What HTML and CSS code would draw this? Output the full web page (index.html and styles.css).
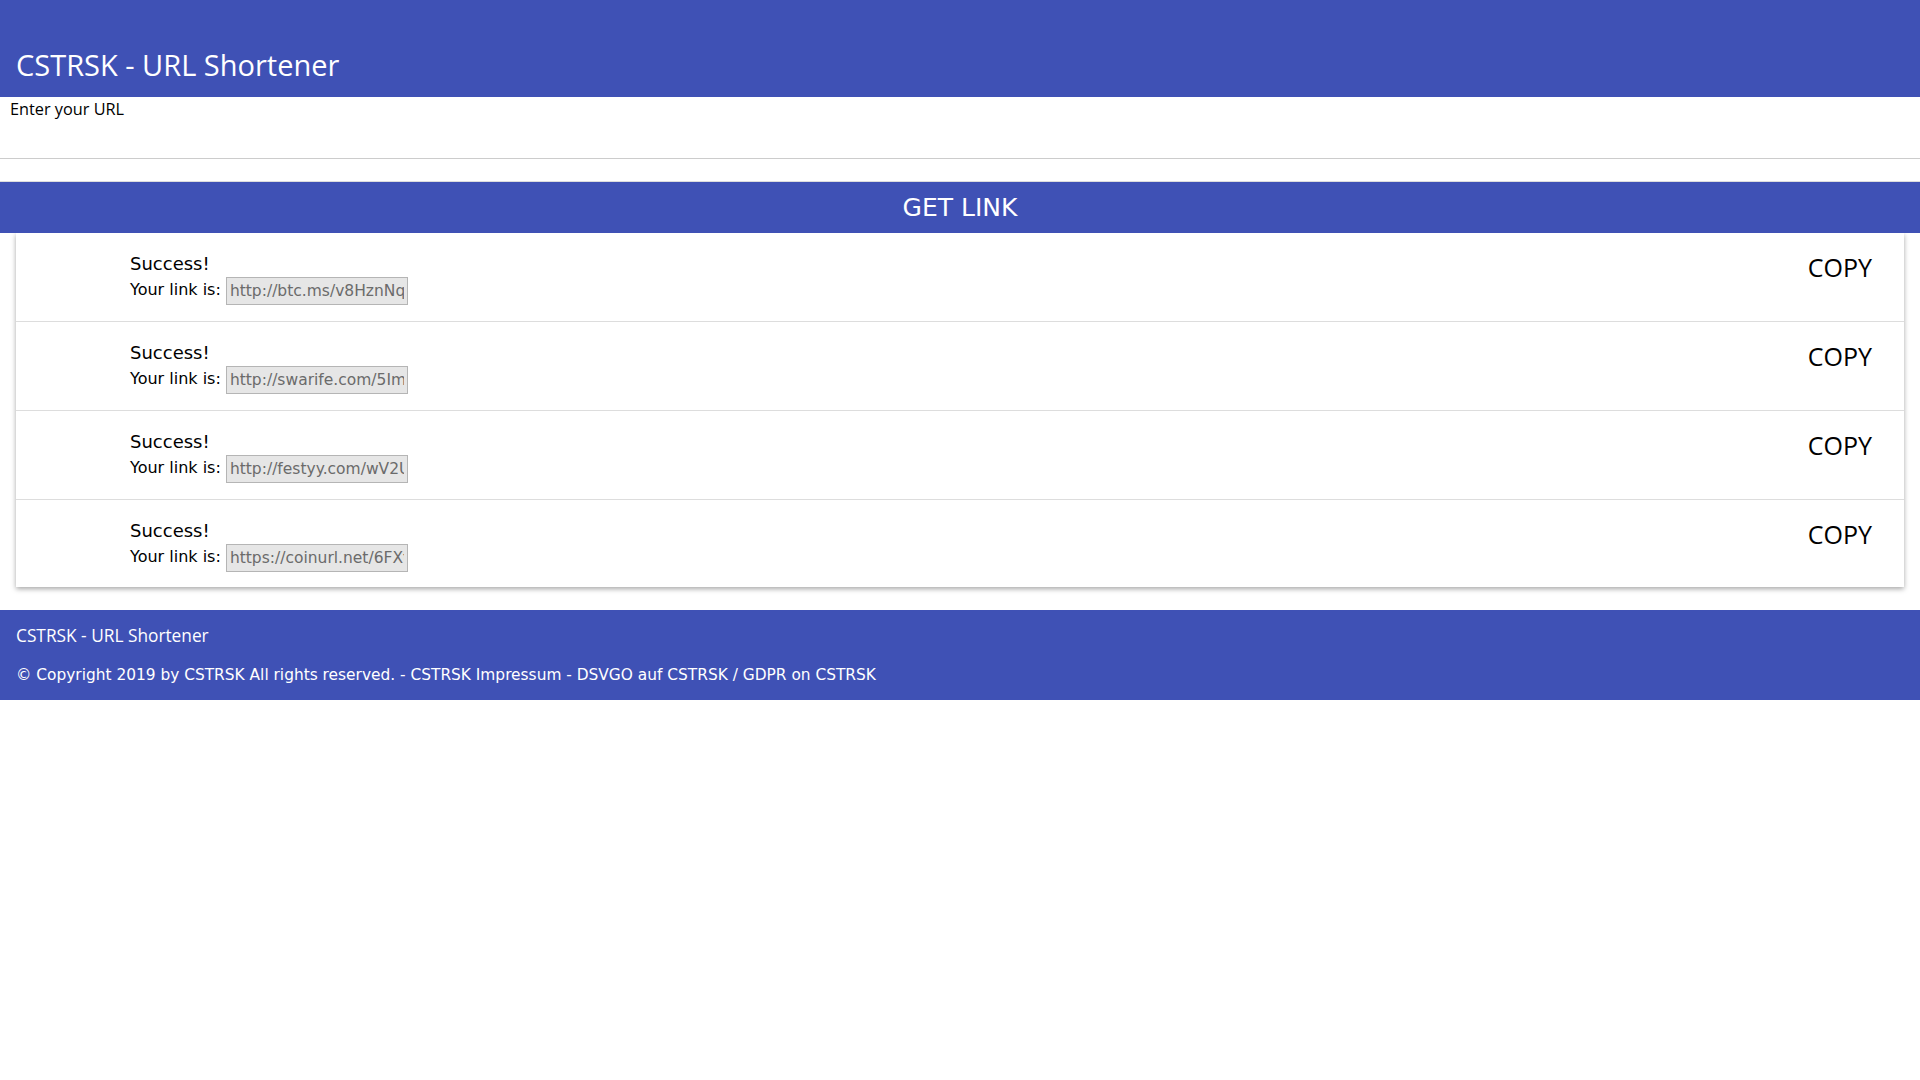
FILE: index.html
```html
<!DOCTYPE html>
<html>
<head>
  <title>CSTRSK - URL Shortener</title>
  <link rel="stylesheet" href="styles.css">
</head>
<body>
  <header class="top-bar">
    <h1>CSTRSK - URL Shortener</h1>
  </header>

  <form class="short-form">
    <label for="url">Enter your URL</label>
    <input type="text" id="url" name="url">
    <button type="button" class="btnGet">GET LINK</button>
  </form>

  <div class="link-list">
    <div class="link-row">
      <div class="link-info">
        <p class="link-ok">Success!</p>
        <p class="link-line">Your link is: <input class="link-out" type="text" value="http://btc.ms/v8HznNq" readonly></p>
      </div>
      <button type="button" class="btnCopy">COPY</button>
    </div>
    <div class="link-row">
      <div class="link-info">
        <p class="link-ok">Success!</p>
        <p class="link-line">Your link is: <input class="link-out" type="text" value="http://swarife.com/5Im8" readonly></p>
      </div>
      <button type="button" class="btnCopy">COPY</button>
    </div>
    <div class="link-row">
      <div class="link-info">
        <p class="link-ok">Success!</p>
        <p class="link-line">Your link is: <input class="link-out" type="text" value="http://festyy.com/wV2U" readonly></p>
      </div>
      <button type="button" class="btnCopy">COPY</button>
    </div>
    <div class="link-row">
      <div class="link-info">
        <p class="link-ok">Success!</p>
        <p class="link-line">Your link is: <input class="link-out" type="text" value="https://coinurl.net/6FXt" readonly></p>
      </div>
      <button type="button" class="btnCopy">COPY</button>
    </div>
  </div>

  <footer class="bottom-bar">
    <p class="foot-title">CSTRSK - URL Shortener</p>
    <p class="foot-copy">&copy; Copyright 2019 by CSTRSK All rights reserved. - CSTRSK Impressum - DSVGO auf CSTRSK / GDPR on CSTRSK</p>
  </footer>
</body>
</html>
```

FILE: styles.css
```css
body {
  margin: 0;
  font-family: "Open Sans", "Noto Sans", sans-serif;
  color: #000;
  background: #fff;
}

.top-bar {
  background-color: #3f51b5;
  height: 97px;
  display: flex;
  align-items: flex-end;
  padding: 0 16px;
  box-sizing: border-box;
}

.top-bar h1 {
  margin: 0 0 13px;
  font-weight: normal;
  font-size: 29px;
  color: #fff;
}

.short-form {
  display: flex;
  flex-direction: column;
}

.short-form label {
  font-size: 16.3px;
  padding: 2px 10px 0;
  line-height: 20px;
}

.short-form input {
  border: none;
  border-bottom: 1px solid #ccc;
  height: 39px;
  padding: 0 10px;
  font-size: 16px;
  outline: none;
}

.btnGet {
  margin-top: 22px;
  border: none;
  border-top: 1px solid #ddd;
  background-color: #3f51b5;
  color: #fff;
  height: 52px;
  font-family: "DejaVu Sans", Verdana, sans-serif;
  font-size: 25px;
  cursor: pointer;
}

.link-list {
  margin: 0 16px;
  background: #fff;
  box-shadow: 0 2px 5px rgba(0, 0, 0, 0.35);
}

.link-row {
  display: flex;
  justify-content: space-between;
  align-items: flex-start;
  height: 89px;
  box-sizing: border-box;
  padding: 0 32px 0 114px;
  border-bottom: 1px solid #ddd;
}

.link-row:last-child {
  height: 87px;
  border-bottom: none;
}

.link-info {
  font-family: "DejaVu Sans", Verdana, sans-serif;
  padding-top: 20px;
}

.link-info p {
  margin: 0;
}

.link-ok {
  font-size: 18px;
  line-height: 22px;
}

.link-line {
  font-size: 16px;
  line-height: 28px;
  margin-top: 1px !important;
}

.link-out {
  width: 182px;
  height: 28px;
  box-sizing: border-box;
  padding: 0 3px;
  border: 1px solid #b5b5b5;
  background-color: #e6e6e6;
  color: #6b6b6b;
  font-family: "DejaVu Sans", Verdana, sans-serif;
  font-size: 15.5px;
  vertical-align: middle;
}

.btnCopy {
  margin-top: 17px;
  border: none;
  background: none;
  padding: 0;
  font-family: "Open Sans", "Noto Sans", sans-serif;
  font-size: 25px;
  color: #000;
  cursor: pointer;
}

.bottom-bar {
  margin-top: 23px;
  background-color: #3f51b5;
  color: #fff;
  height: 90px;
  padding: 14px 16px 0;
  box-sizing: border-box;
}

.bottom-bar p {
  margin: 0;
}

.foot-title {
  font-size: 17.3px;
  line-height: 24px;
}

.foot-copy {
  margin-top: 17px !important;
  font-family: "DejaVu Sans", Verdana, sans-serif;
  font-size: 15.4px;
  line-height: 20px;
}
```
